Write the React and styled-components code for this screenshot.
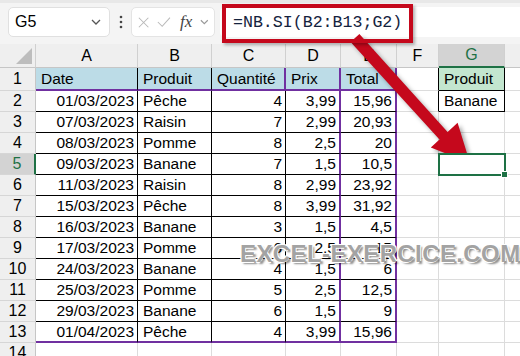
import React from 'react';
import styled, { createGlobalStyle } from 'styled-components';

const GREEN = '#1e7145';
const PURPLE = '#7030a0';
const GRID = '#dcdcdc';
const RED = '#c5081c';

const Global = createGlobalStyle`
  html, body { margin: 0; padding: 0; background: #fff; overflow: hidden; }
  body { font-family: "Liberation Sans", Arial, sans-serif; color: #000; }
`;

const Page = styled.div`
  position: relative;
  width: 520px;
  height: 356px;
  overflow: hidden;
  background: #fff;
`;

const Toolbar = styled.div`
  display: flex;
  align-items: center;
  height: 44px;
  box-sizing: border-box;
  padding: 4px 0 7px 8px;
  border-top: 3px solid #e8e8e8;
  background: #f4f4f4;
`;

const NameBox = styled.div`
  display: flex;
  align-items: center;
  justify-content: space-between;
  box-sizing: border-box;
  width: 102px;
  height: 30px;
  padding: 0 8px 0 6px;
  background: #fff;
  border: 1px solid #e0e0e0;
  border-radius: 5px;
  font-size: 16px;
`;

const Dots = styled.div`
  display: flex;
  justify-content: center;
  width: 21px;
`;

const FuncBox = styled.div`
  display: flex;
  align-items: center;
  gap: 8px;
  box-sizing: border-box;
  width: 84px;
  height: 30px;
  padding: 0 5px 0 6px;
  background: #fff;
  border: 1px solid #e4e4e4;
  border-radius: 5px;
`;

const Fx = styled.span`
  font-family: "Liberation Serif", "Times New Roman", serif;
  font-style: italic;
  font-size: 17px;
  color: #444;
  margin-left: 1px;
`;

const FormulaInput = styled.div`
  flex: 1;
  display: flex;
  align-items: center;
  height: 30px;
  margin-left: 5px;
  padding-left: 13px;
  background: #fff;
  border-radius: 5px 0 0 5px;
  font-family: "Liberation Mono", "Courier New", monospace;
  font-size: 16.6px;
  color: #14223d;
`;

const Sheet = styled.div`
  display: grid;
  grid-template-columns: 36px 102px 74px 74px 55px 56px 42px 66px 64px;
  grid-template-rows: 24px 23px repeat(13, 21px);
`;

const Corner = styled.div`
  position: relative;
  background: #efefef;
  border-right: 1px solid #d0d0d0;
  border-bottom: 1px solid #c6c6c6;
  box-sizing: border-box;
`;

const CornerMark = styled.div`
  position: absolute;
  right: 3px;
  bottom: 3px;
  width: 16px;
  height: 16px;
  background: #bdbdbd;
  clip-path: polygon(100% 0, 100% 100%, 0 100%);
`;

const ColHead = styled.div`
  display: flex;
  align-items: center;
  justify-content: center;
  box-sizing: border-box;
  font-size: 16px;
  background: ${p => (p.$active ? '#d3d3d3' : '#efefef')};
  color: ${p => (p.$active ? GREEN : '#000')};
  border-right: 1px solid #d0d0d0;
  border-bottom: ${p => (p.$active ? `2px solid ${GREEN}` : '1px solid #c6c6c6')};
`;

const RowHead = styled.div`
  display: flex;
  align-items: center;
  justify-content: center;
  box-sizing: border-box;
  font-size: 16px;
  background: ${p => (p.$active ? '#d3d3d3' : '#efefef')};
  color: ${p => (p.$active ? GREEN : '#000')};
  border-right: ${p => (p.$active ? `2px solid ${GREEN}` : '1px solid #c6c6c6')};
  border-bottom: 1px solid #d6d6d6;
`;

const Cell = styled.div`
  position: relative;
  display: flex;
  align-items: center;
  justify-content: ${p => (p.$right ? 'flex-end' : 'flex-start')};
  box-sizing: border-box;
  padding: 0 3px 0 5px;
  font-size: 15.5px;
  white-space: nowrap;
  background: ${p => p.$bg || '#fff'};
  border-right: ${p => p.$rw || 1}px solid ${p => p.$rc || GRID};
  border-bottom: ${p => p.$bw || 1}px solid ${p => p.$bc || GRID};
  ${p => p.$selected && `
    z-index: 2;
    outline: 2px solid ${GREEN};
    outline-offset: -1px;
    &::after {
      content: '';
      position: absolute;
      right: -4px;
      bottom: -4px;
      width: 5px;
      height: 5px;
      background: ${GREEN};
      border: 1px solid #fff;
    }
  `}
`;

const RedFrame = styled.div`
  position: absolute;
  left: 222px;
  top: 4px;
  width: 191px;
  height: 39px;
  box-sizing: border-box;
  border: 4px solid ${RED};
  box-shadow: 2px 2px 3px rgba(0, 0, 0, 0.3);
`;

const Arrow = styled.svg`
  position: absolute;
  left: 0;
  top: 0;
  pointer-events: none;
  filter: drop-shadow(3px 3px 2px rgba(0, 0, 0, 0.35));
`;

const Watermark = styled.div`
  position: absolute;
  left: 240px;
  top: 240px;
  font-size: 24px;
  letter-spacing: 0.4px;
  font-weight: bold;
  color: #a3a3a3;
  white-space: nowrap;
  text-shadow: -1px -1px 0 #fff, 1px -1px 0 #fff, -1px 1px 0 #fff,
    2px 2px 2px rgba(0, 0, 0, 0.45);
  pointer-events: none;
`;

const cols = ['A', 'B', 'C', 'D', 'E', 'F', 'G', ''];

const rows = [
  ['Date', 'Produit', 'Quantité', 'Prix', 'Total'],
  ['01/03/2023', 'Pêche', '4', '3,99', '15,96'],
  ['07/03/2023', 'Raisin', '7', '2,99', '20,93'],
  ['08/03/2023', 'Pomme', '8', '2,5', '20'],
  ['09/03/2023', 'Banane', '7', '1,5', '10,5'],
  ['11/03/2023', 'Raisin', '8', '2,99', '23,92'],
  ['15/03/2023', 'Pêche', '8', '3,99', '31,92'],
  ['16/03/2023', 'Banane', '3', '1,5', '4,5'],
  ['17/03/2023', 'Pomme', '6', '2,5', '15'],
  ['24/03/2023', 'Banane', '4', '1,5', '6'],
  ['25/03/2023', 'Pomme', '5', '2,5', '12,5'],
  ['29/03/2023', 'Banane', '6', '1,5', '9'],
  ['01/04/2023', 'Pêche', '4', '3,99', '15,96'],
];

const Chevron = ({ color = '#555' }) => (
  <svg width="10" height="6" viewBox="0 0 10 6">
    <path d="M1 1l4 4 4-4" fill="none" stroke={color} strokeWidth="1.3" />
  </svg>
);

function cellProps(r, c) {
  // r: 1..14, c: 0..7 (A..H)
  const p = {};
  const inTable = r <= 13 && c <= 4;
  if (inTable) {
    p.$rc = '#000';
    p.$bc = '#000';
    if (c >= 3 || (r === 1 && c === 2)) { p.$rc = PURPLE; p.$rw = 2; }
    if (r === 1 || r === 13) { p.$bc = PURPLE; p.$bw = 2; }
    if (r === 1) p.$bg = '#bcdce7';
    if (r > 1 && c !== 1) p.$right = true;
  }
  if (c === 5 && r <= 2) p.$rc = '#000';
  if (c === 6 && r <= 2) { p.$rc = '#000'; p.$bc = '#000'; }
  if (c === 6 && r === 1) p.$bg = '#c3e6cf';
  if (c === 6 && r === 5) p.$selected = true;
  return p;
}

function cellText(r, c) {
  if (r <= 13 && c <= 4) return rows[r - 1][c];
  if (c === 6 && r === 1) return 'Produit';
  if (c === 6 && r === 2) return 'Banane';
  return '';
}

export default function App() {
  const body = [];
  for (let r = 1; r <= 14; r++) {
    body.push(<RowHead key={`h${r}`} $active={r === 5}>{r}</RowHead>);
    for (let c = 0; c < cols.length; c++) {
      body.push(
        <Cell key={`${r}-${c}`} {...cellProps(r, c)}>{cellText(r, c)}</Cell>
      );
    }
  }

  return (
    <Page>
      <Global />
      <Toolbar>
        <NameBox>
          <span>G5</span>
          <Chevron />
        </NameBox>
        <Dots>
          <svg width="4" height="14" viewBox="0 0 4 14">
            <circle cx="2" cy="2" r="1.3" fill="#444" />
            <circle cx="2" cy="7" r="1.3" fill="#444" />
            <circle cx="2" cy="12" r="1.3" fill="#444" />
          </svg>
        </Dots>
        <FuncBox>
          <svg width="13" height="13" viewBox="0 0 13 13">
            <path d="M1 1l11 11M12 1L1 12" stroke="#b9b9b9" strokeWidth="1.2" />
          </svg>
          <svg width="16" height="12" viewBox="0 0 16 12">
            <path d="M1 6l5 5 9-10" fill="none" stroke="#b9b9b9" strokeWidth="1.2" />
          </svg>
          <Fx>fx</Fx>
          <Chevron color="#999" />
        </FuncBox>
        <FormulaInput>=NB.SI(B2:B13;G2)</FormulaInput>
      </Toolbar>

      <Sheet>
        <Corner><CornerMark /></Corner>
        {cols.map((c, i) => (
          <ColHead key={i} $active={c === 'G'}>{c}</ColHead>
        ))}
        {body}
      </Sheet>

      <Watermark>EXCEL-EXERCICE.COM</Watermark>

      <Arrow width="520" height="356" viewBox="0 0 520 356">
        <polygon
          fill={RED}
          points="350.6,42 359.4,34 447.6,131.9 457.6,122.8 470,163 430.8,147.4 439.5,139.4"
        />
      </Arrow>

      <RedFrame />
    </Page>
  );
}
